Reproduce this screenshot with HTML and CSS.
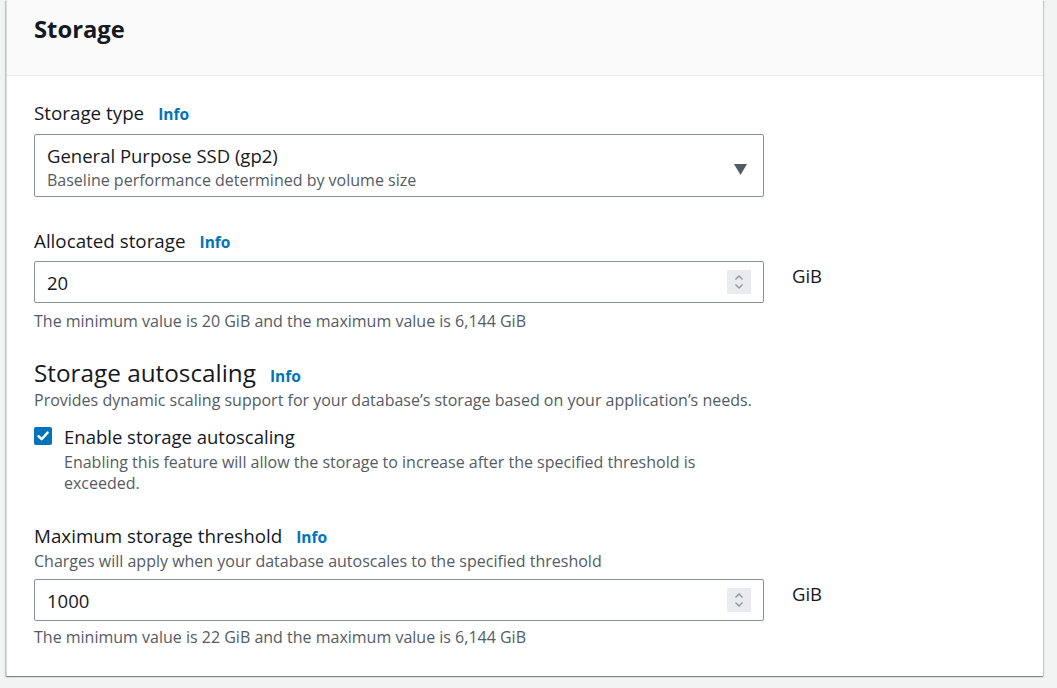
FILE: index.html
```html
<!DOCTYPE html>
<html lang="en">
<head>
<meta charset="utf-8">
<title>Storage</title>
<link rel="stylesheet" href="styles.css">
</head>
<body>
<div class="container">
  <div class="header"><h2 class="title">Storage</h2></div>
  <div class="content">
    <div class="label-row"><span class="label">Storage type</span><a class="info">Info</a></div>
    <div class="select">
      <div class="select-text">
        <div class="select-main">General Purpose SSD (gp2)</div>
        <div class="select-desc">Baseline performance determined by volume size</div>
      </div>
      <svg class="caret" width="13" height="11" viewBox="0 0 13 11"><path d="M0 0H13L6.5 11Z" fill="#545b64"/></svg>
    </div>

    <div class="label-row gap-lg"><span class="label">Allocated storage</span><a class="info">Info</a></div>
    <div class="input-row">
      <div class="input">
        <span class="value">20</span>
        <span class="spinner"><svg width="10" height="16" viewBox="0 0 10 16"><path d="M1.5 5.5L5 2L8.5 5.5M1.5 10.5L5 14L8.5 10.5" fill="none" stroke="#8d9599" stroke-width="1.4"/></svg></span>
      </div>
      <span class="unit">GiB</span>
    </div>
    <div class="hint">The minimum value is 20 GiB and the maximum value is 6,144 GiB</div>

    <div class="h3-row"><span class="h3">Storage autoscaling</span><a class="info">Info</a></div>
    <div class="desc desc-tight">Provides dynamic scaling support for your database’s storage based on your application’s needs.</div>

    <div class="check-row">
      <span class="checkbox"><svg width="18" height="18" viewBox="0 0 18 18"><path d="M4.5 9.2L7.6 12.2L13.6 5.6" fill="none" stroke="#fff" stroke-width="2.4" stroke-linecap="round" stroke-linejoin="round"/></svg></span>
      <div class="check-body">
        <div class="check-label">Enable storage autoscaling</div>
        <div class="check-desc">Enabling this feature will allow the storage to increase after the specified threshold is exceeded.</div>
      </div>
    </div>

    <div class="label-row gap-xl"><span class="label">Maximum storage threshold</span><a class="info">Info</a></div>
    <div class="desc">Charges will apply when your database autoscales to the specified threshold</div>
    <div class="input-row second">
      <div class="input">
        <span class="value">1000</span>
        <span class="spinner"><svg width="10" height="16" viewBox="0 0 10 16"><path d="M1.5 5.5L5 2L8.5 5.5M1.5 10.5L5 14L8.5 10.5" fill="none" stroke="#8d9599" stroke-width="1.4"/></svg></span>
      </div>
      <span class="unit">GiB</span>
    </div>
    <div class="hint hint-last">The minimum value is 22 GiB and the maximum value is 6,144 GiB</div>
  </div>
</div>
</body>
</html>
```

FILE: styles.css
```css
* { box-sizing: border-box; }
html, body { margin: 0; padding: 0; }
body {
  background: #f2f3f3;
  font-family: "Open Sans", "Noto Sans", Arial, sans-serif;
  color: #16191f;
  height: 688px;
  overflow: hidden;
}
.container {
  margin-left: 6px;
  width: 1037px;
  background: #fff;
  border-left: 1px solid #d5dbdb;
  box-shadow: 0 1px 1px 0 rgba(0, 28, 36, 0.3), 1px 1px 1px 0 rgba(0, 28, 36, 0.15), -1px 1px 1px 0 rgba(0, 28, 36, 0.15);
}
.header {
  height: 76px;
  background: #fafafa;
  border-bottom: 1px solid #eaeded;
  padding: 13px 27px 0;
}
.title {
  margin: 0;
  font-size: 23.8px;
  line-height: 32px;
  font-weight: 700;
}
.content {
  padding: 23px 27px 29px;
}
.label-row { display: flex; align-items: baseline; line-height: 28px; height: 28px; }
.label { font-size: 18.8px; }
.info {
  margin-left: 14px;
  font-size: 15.5px;
  font-weight: 700;
  color: #0073bb;
}
.gap-lg { margin-top: 30px; }
.gap-xl { margin-top: 28px; }

.select {
  margin-top: 7px;
  width: 730px;
  height: 63px;
  border: 1px solid #879596;
  border-radius: 2px;
  padding: 7px 12px 0;
  display: flex;
  align-items: center;
}
.select-text { flex: 1; align-self: flex-start; }
.select-main { font-size: 18.5px; line-height: 28px; }
.select-desc { font-size: 16px; line-height: 20px; color: #545b64; }
.caret { margin-right: 4px; margin-top: 0; }

.input-row { display: flex; align-items: flex-start; margin-top: 6px; }
.input-row.second { margin-top: 8px; }
.input {
  width: 730px;
  height: 42px;
  border: 1px solid #879596;
  border-radius: 2px;
  padding: 0 12px;
  display: flex;
  align-items: center;
  justify-content: space-between;
}
.value { font-size: 18.5px; }
.spinner {
  width: 24px;
  height: 24px;
  background: #eaebee;
  display: flex;
  align-items: center;
  justify-content: center;
}
.unit { margin-left: 28px; margin-top: 1px; font-size: 18.5px; line-height: 28px; }

.hint { margin-top: 8px; font-size: 16px; line-height: 20px; color: #545b64; }
.hint-last { margin-top: 6px; }

.h3-row { display: flex; align-items: baseline; margin-top: 26px; line-height: 32px; }
.h3 { font-size: 24.3px; }
.desc { margin-top: 1px; font-size: 16px; line-height: 20px; color: #545b64; }
.desc-tight { margin-top: -2px; }

.check-row { display: flex; align-items: flex-start; margin-top: 13px; width: 730px; }
.checkbox {
  width: 18px;
  height: 18px;
  margin-top: 4px;
  background: #0073bb;
  border-radius: 2px;
  flex: none;
  display: flex;
}
.check-body { margin-left: 12px; flex: 1; }
.check-label { font-size: 18.5px; line-height: 28px; }
.check-desc { font-size: 16px; line-height: 21px; color: #545b64; margin-top: 1px; }
```
